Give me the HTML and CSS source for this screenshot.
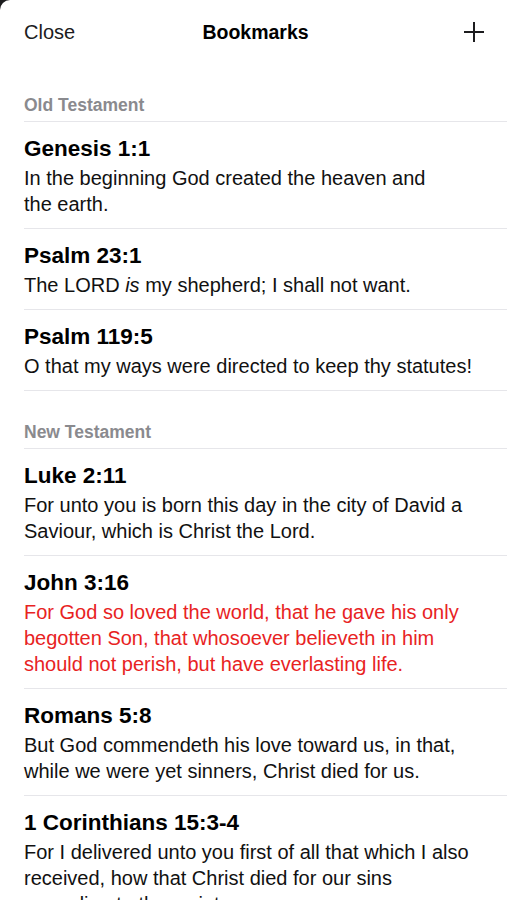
FILE: index.html
```html
<!DOCTYPE html>
<html lang="en">
  <head>
    <meta charset="UTF-8" />
    <meta name="viewport" content="width=device-width, initial-scale=1.0" />
    <title>Bookmarks</title>
    <link rel="stylesheet" href="styles.css">
  </head>
  <body>
    <div class="sheet">
      <header class="nav-bar">
        <button class="nav-button">Close</button>
        <h1 class="nav-title">Bookmarks</h1>
        <button class="icon-button" aria-label="Add bookmark">
          <svg viewBox="0 0 22 22" width="22" height="22">
            <path d="M11 1v20M1 11h20" stroke="#1c1c1e" stroke-width="2" fill="none" />
          </svg>
        </button>
      </header>

      <section class="group">
        <h2 class="group-title">Old Testament</h2>
        <ul class="verse-list">
          <li class="verse">
            <div class="verse-ref">Genesis 1:1</div>
            <p class="verse-text">In the beginning God created the heaven and<br>the earth.</p>
          </li>
          <li class="verse">
            <div class="verse-ref">Psalm 23:1</div>
            <p class="verse-text">The LORD <em>is</em> my shepherd; I shall not want.</p>
          </li>
          <li class="verse">
            <div class="verse-ref">Psalm 119:5</div>
            <p class="verse-text">O that my ways were directed to keep thy statutes!</p>
          </li>
        </ul>
      </section>

      <section class="group">
        <h2 class="group-title">New Testament</h2>
        <ul class="verse-list">
          <li class="verse">
            <div class="verse-ref">Luke 2:11</div>
            <p class="verse-text">For unto you is born this day in the city of David a Saviour, which is Christ the Lord.</p>
          </li>
          <li class="verse">
            <div class="verse-ref">John 3:16</div>
            <p class="verse-text highlight">For God so loved the world, that he gave his only begotten Son, that whosoever believeth in him should not perish, but have everlasting life.</p>
          </li>
          <li class="verse">
            <div class="verse-ref">Romans 5:8</div>
            <p class="verse-text">But God commendeth his love toward us, in that, while we were yet sinners, Christ died for us.</p>
          </li>
          <li class="verse">
            <div class="verse-ref">1 Corinthians 15:3-4</div>
            <p class="verse-text">For I delivered unto you first of all that which I also received, how that Christ died for our sins according to the scriptures:</p>
          </li>
        </ul>
      </section>
    </div>
  </body>
</html>
```

FILE: styles.css
```css
body {
  font-family: 'Liberation Sans', Arial, sans-serif;
  margin: 0;
  padding: 0;
  background-color: #1c1c1e;
  color: #000;
}

.sheet {
  background-color: white;
  border-radius: 10px 0 0 0;
  min-height: 100vh;
  overflow: hidden;
}

.nav-bar {
  display: flex;
  justify-content: space-between;
  align-items: center;
  height: 64px;
  padding: 0 24px;
  box-sizing: border-box;
  position: relative;
}

.nav-button {
  border: none;
  background: transparent;
  padding: 0;
  font-family: inherit;
  font-size: 20px;
  color: #1c1c1e;
  cursor: pointer;
}

.nav-title {
  margin: 0;
  font-size: 19.5px;
  font-weight: 700;
  position: absolute;
  left: 50%;
  transform: translateX(-50%);
  margin-left: 2px;
}

.icon-button {
  display: flex;
  align-items: center;
  justify-content: center;
  border: none;
  background: transparent;
  padding: 0;
  margin-right: -2px;
  cursor: pointer;
}

/* Section headers */
.group {
  margin-left: 24px;
}

.group-title {
  margin: 0;
  padding: 31px 0 6px;
  font-size: 17.5px;
  line-height: 20px;
  font-weight: 700;
  color: #8a8a8e;
  border-bottom: 1px solid #e6e6ea;
}

.verse-list {
  list-style: none;
  margin: 0;
  padding: 0;
}

.verse {
  padding: 13px 24px 11px 0;
  border-bottom: 1px solid #e6e6ea;
}

.verse-ref {
  font-size: 22.5px;
  line-height: 28px;
  font-weight: 700;
  margin-bottom: 2px;
}

.verse-text {
  margin: 0;
  font-size: 20px;
  line-height: 26px;
  color: #111;
}

.verse-text.highlight {
  color: #e8231f;
}
```
